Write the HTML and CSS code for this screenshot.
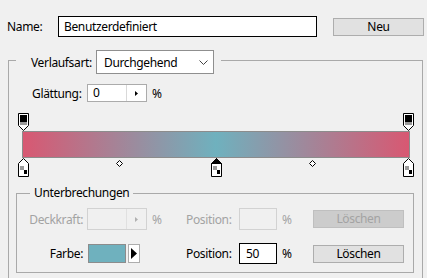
FILE: index.html
```html
<!DOCTYPE html>
<html lang="de">
<head>
  <meta charset="UTF-8" />
  <title>Verläufe bearbeiten</title>
  <link rel="stylesheet" href="styles.css">
</head>
<body>
  <svg class="defs" width="0" height="0">
    <symbol id="opacity-stop" viewBox="0 0 11 18">
      <path d="M0.5 0.5 H10.5 V12.5 L5.5 17.5 L0.5 12.5 Z" fill="#fff" stroke="#000" />
      <rect x="2" y="2" width="7" height="7" fill="#000" />
      <rect x="2" y="9" width="7" height="3" fill="#9a9a9a" />
    </symbol>
    <symbol id="color-stop" viewBox="0 0 11 19">
      <path d="M5.5 0.5 L10.5 5.5 V18.5 H0.5 V5.5 Z" fill="#fff" stroke="#000" />
      <rect x="2" y="8" width="4" height="4" fill="#9a9a9a" />
      <rect x="6" y="12" width="3" height="4" fill="#000" />
    </symbol>
    <symbol id="midpoint" viewBox="0 0 7 7">
      <path d="M3.5 0.5 L6.5 3.5 L3.5 6.5 L0.5 3.5 Z" fill="#fff" stroke="#000" />
    </symbol>
  </svg>

  <div class="name-row">
    <label class="name-label" for="preset-name">Name:</label>
    <input class="name-input" id="preset-name" type="text" value="Benutzerdefiniert" />
    <button class="btn btn-new">Neu</button>
  </div>

  <fieldset class="group">
    <legend class="group-head">
      <span class="type-label">Verlaufsart:</span>
      <div class="select">
        <span>Durchgehend</span>
        <svg class="chevron" width="9" height="5" viewBox="0 0 9 5">
          <polyline points="0.5,0.5 4.5,4.5 8.5,0.5" fill="none" stroke="#444" />
        </svg>
      </div>
    </legend>

    <div class="smooth-row">
      <span class="smooth-label">Glättung:</span>
      <div class="spin">
        <span class="spin-value">0</span>
        <span class="spin-btn">
          <svg width="3" height="5" viewBox="0 0 3 5"><path d="M0 0 L3 2.5 L0 5 Z" fill="#000" /></svg>
        </span>
      </div>
      <span class="pct">%</span>
    </div>

    <div class="gradient">
      <div class="bar"></div>
      <svg class="stop top" style="left: -4px"><use href="#opacity-stop" /></svg>
      <svg class="stop top" style="left: 381px"><use href="#opacity-stop" /></svg>
      <svg class="stop bottom" style="left: -4px"><use href="#color-stop" /></svg>
      <svg class="stop bottom selected" style="left: 189px" viewBox="0 0 11 19">
        <use href="#color-stop" />
        <path d="M5.5 0.5 L10.5 5.5 H0.5 Z" fill="#000" stroke="#000" />
      </svg>
      <svg class="stop bottom" style="left: 381px"><use href="#color-stop" /></svg>
      <svg class="mid" style="left: 94px"><use href="#midpoint" /></svg>
      <svg class="mid" style="left: 287px"><use href="#midpoint" /></svg>
    </div>

    <fieldset class="stops">
      <legend class="stops-head">Unterbrechungen</legend>

      <div class="stop-row disabled">
        <span class="lbl">Deckkraft:</span>
        <div class="ctl">
          <div class="spin">
            <span class="spin-value"></span>
            <span class="spin-btn">
              <svg width="3" height="5" viewBox="0 0 3 5"><path d="M0 0 L3 2.5 L0 5 Z" fill="#b0b0b0" /></svg>
            </span>
          </div>
          <span class="pct">%</span>
        </div>
        <span class="pos-label">Position:</span>
        <span class="pos-input"></span>
        <span class="pos-pct">%</span>
        <button class="btn btn-delete" disabled>Löschen</button>
      </div>

      <div class="stop-row">
        <span class="lbl">Farbe:</span>
        <div class="ctl">
          <span class="swatch"></span>
          <span class="swatch-btn">
            <svg width="6" height="11" viewBox="0 0 6 11"><path d="M0 0 L6 5.5 L0 11 Z" fill="#000" /></svg>
          </span>
        </div>
        <span class="pos-label">Position:</span>
        <span class="pos-input">50</span>
        <span class="pos-pct">%</span>
        <button class="btn btn-delete">Löschen</button>
      </div>
    </fieldset>
  </fieldset>
</body>
</html>
```

FILE: styles.css
```css
* {
  box-sizing: border-box;
}
body {
  margin: 0;
  background-color: #f0f0f0;
  font-family: "Noto Sans", "Open Sans", sans-serif;
  font-size: 12px;
  letter-spacing: -0.35px;
  color: #000;
  overflow: hidden;
}
.defs {
  position: absolute;
}
.name-row {
  display: flex;
  align-items: center;
  padding: 16px 0 0 7px;
}
.name-label {
  width: 51px;
}
.name-input {
  width: 259px;
  height: 21px;
  border: 1px solid #000;
  padding: 0 5px;
  font: inherit;
  letter-spacing: inherit;
  background-color: #fff;
}
.btn {
  height: 18px;
  padding: 0;
  font: inherit;
  letter-spacing: inherit;
  line-height: 16px;
  background-color: #e1e1e1;
  border: 1px solid #adadad;
  color: #000;
}
.btn-new {
  width: 91px;
  margin-left: 16px;
}
.group {
  margin: 9px 0 0 8px;
  width: 415px;
  padding: 0 0 30px;
  border: 1px solid #a9a9a9;
  min-inline-size: 0;
}
.group-head {
  display: flex;
  align-items: center;
  margin-left: 7px;
  padding: 4px 7px 0 15px;
}
.type-label {
  width: 65px;
}
.select {
  display: flex;
  align-items: center;
  justify-content: space-between;
  width: 118px;
  height: 24px;
  padding: 0 5px 0 7px;
  background-color: #fff;
  border: 1px solid #8f8f8f;
}
.smooth-row {
  display: flex;
  align-items: center;
  margin: 10px 0 0 23px;
}
.smooth-label {
  width: 55px;
}
.spin {
  display: flex;
  width: 60px;
  height: 18px;
  background-color: #fff;
  border: 1px solid #ababab;
}
.spin-value {
  flex: 1;
  padding-left: 5px;
  line-height: 16px;
}
.spin-btn {
  display: flex;
  align-items: center;
  justify-content: center;
  width: 20px;
  border-left: 1px solid #d9d9d9;
}
.pct {
  margin-left: 5px;
}
.gradient {
  position: relative;
  width: 388px;
  height: 63px;
  margin: 11px 0 0 13px;
}
.bar {
  position: relative;
  top: 18px;
  height: 27px;
  border: 1px solid #8c8c8c;
  background: linear-gradient(to right, #d85872 0%, #6fb1be 50%, #d85872 100%);
}
.stop {
  position: absolute;
  width: 11px;
}
.stop.top {
  top: 0;
  height: 18px;
}
.stop.bottom {
  top: 45px;
  height: 19px;
}
.mid {
  position: absolute;
  top: 47px;
  width: 7px;
  height: 7px;
}
.stops {
  margin: 9px 0 0 7px;
  width: 398px;
  padding: 7px 0 8px;
  border: 1px solid #a9a9a9;
  min-inline-size: 0;
}
.stops-head {
  margin-left: 13px;
  padding: 0 4px;
  line-height: 16px;
}
.stop-row {
  display: flex;
  align-items: center;
  height: 22px;
}
.stop-row + .stop-row {
  margin-top: 13px;
  height: 21px;
}
.lbl {
  width: 66px;
  margin-right: 4px;
  text-align: right;
}
.ctl {
  display: flex;
  align-items: center;
  width: 99px;
}
.disabled {
  color: #a3a3a3;
}
.disabled .spin {
  height: 22px;
  background-color: #f0f0f0;
  border-color: #d2d2d2;
}
.disabled .spin-btn {
  border-left-color: #e0e0e0;
}
.swatch {
  width: 38px;
  height: 19px;
  margin-left: 1px;
  background-color: #6fb1be;
  border: 1px solid #8c8c8c;
}
.swatch-btn {
  display: flex;
  align-items: center;
  justify-content: center;
  width: 12px;
  height: 19px;
  margin-left: 2px;
  background-color: #fff;
  border: 1px solid #adadad;
}
.pos-label {
  width: 53px;
}
.pos-input {
  width: 38px;
  height: 21px;
  padding-left: 6px;
  line-height: 19px;
  background-color: #fff;
  border: 1px solid #000;
}
.disabled .pos-input {
  height: 22px;
  background-color: #f0f0f0;
  border-color: #d2d2d2;
}
.pos-pct {
  width: 36px;
  padding-left: 5px;
}
.btn-delete {
  width: 91px;
}
.btn-delete:disabled {
  background-color: #cccccc;
  border-color: #bfbfbf;
  color: #a3a3a3;
}
```
